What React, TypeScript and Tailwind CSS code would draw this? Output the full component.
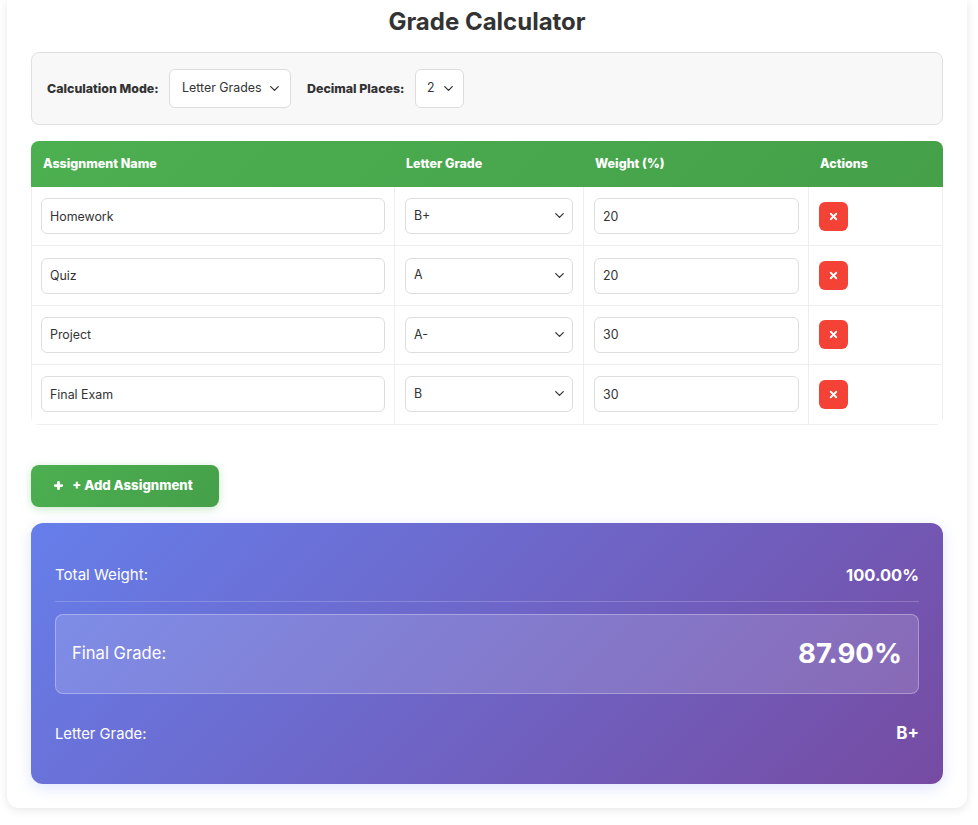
import React from "react";
import { ChevronDown, Plus, X } from "lucide-react";

const ROWS = [
  { name: "Homework", grade: "B+", weight: "20" },
  { name: "Quiz", grade: "A", weight: "20" },
  { name: "Project", grade: "A-", weight: "30" },
  { name: "Final Exam", grade: "B", weight: "30" },
];

const GRADES = ["A+", "A", "A-", "B+", "B", "B-", "C+", "C", "C-", "D", "F"];

export default function App() {
  return (
    <div className="bg-white pl-[7px] pb-[17px] font-['Inter',sans-serif] text-[#333]">
      <div className="w-[960px] rounded-b-xl bg-white px-6 pb-6 shadow-[0_2px_10px_rgba(0,0,0,0.1)]">
        <h1 className="h-[52px] pt-[5px] text-center text-[24px] leading-[34px] font-bold text-[#333]">Grade Calculator</h1>

        <div className="flex h-[73px] items-center rounded-lg border border-[#e0e0e0] bg-[#f8f8f8] pl-[15px]">
          <label className="w-[122px] pt-px text-[12.4px] font-extrabold">Calculation Mode:</label>
          <div className="relative">
            <select defaultValue="Letter Grades" className="h-[39px] w-[122px] appearance-none rounded-md border border-[#ddd] bg-white pl-3 text-[12.4px]">
              <option>Letter Grades</option>
              <option>Percentages</option>
            </select>
            <ChevronDown size={15} className="pointer-events-none absolute top-3 right-[9px]" />
          </div>
          <label className="ml-4 w-[108px] pt-px text-[12.4px] font-extrabold">Decimal Places:</label>
          <div className="relative">
            <select defaultValue="2" className="h-[39px] w-[49px] appearance-none rounded-md border border-[#ddd] bg-white pl-[11px] text-[12.4px]">
              <option>1</option>
              <option>2</option>
              <option>3</option>
            </select>
            <ChevronDown size={15} className="pointer-events-none absolute top-3 right-2" />
          </div>
        </div>

        <div className="mt-4 overflow-hidden rounded-lg">
          <table className="w-[912px] table-fixed border-separate border-spacing-0 text-[12.4px]">
            <colgroup>
              <col className="w-[364px]" />
              <col className="w-[189px]" />
              <col className="w-[225px]" />
              <col className="w-[134px]" />
            </colgroup>
            <thead>
              <tr className="h-[46px] bg-[linear-gradient(135deg,#4caf50,#45a049)] text-left text-[12.5px] text-white">
                <th className="pl-3 font-extrabold">Assignment Name</th>
                <th className="pl-[11px] font-extrabold">Letter Grade</th>
                <th className="pl-[11px] font-extrabold">Weight (%)</th>
                <th className="pl-[11px] font-extrabold">Actions</th>
              </tr>
            </thead>
            <tbody>
              {ROWS.map((row) => (
                <tr key={row.name} className="h-[59.4px]">
                  <td className="border-r border-b border-l border-[#eee] px-[9px]">
                    <input defaultValue={row.name} className="h-9 w-full rounded-md border border-[#ddd] px-2 text-[12.4px]" />
                  </td>
                  <td className="border-r border-b border-[#eee] px-2.5">
                    <div className="relative">
                      <select defaultValue={row.grade} className="h-9 w-full appearance-none rounded-md border border-[#ddd] bg-white pl-2 text-[12.4px]">
                        {GRADES.map((g) => (
                          <option key={g}>{g}</option>
                        ))}
                      </select>
                      <ChevronDown size={15} className="pointer-events-none absolute top-2.5 right-[6px]" />
                    </div>
                  </td>
                  <td className="border-r border-b border-[#eee] pr-[9px] pl-2.5">
                    <input defaultValue={row.weight} className="h-9 w-full rounded-md border border-[#ddd] px-2 text-[12.4px]" />
                  </td>
                  <td className="border-r border-b border-[#eee] px-2.5">
                    <button className="flex h-[29px] w-[29px] items-center justify-center rounded-md bg-[#f44336] text-white">
                      <X size={11} strokeWidth={4} />
                    </button>
                  </td>
                </tr>
              ))}
            </tbody>
          </table>
        </div>

        <button className="mt-10 flex h-[42px] w-[188px] items-center justify-center gap-2 rounded-lg bg-[linear-gradient(135deg,#4caf50,#45a049)] pr-1 text-[13.2px] font-extrabold text-white shadow-[0_2px_8px_rgba(76,175,80,0.3)]">
          <Plus size={11} strokeWidth={6} />
          <span>+ Add Assignment</span>
        </button>

        <div className="mt-4 h-[261px] rounded-xl bg-[linear-gradient(135deg,#667eea,#764ba2)] px-6 pt-6 text-white shadow-[0_4px_15px_rgba(102,126,234,0.2)]">
          <div className="flex h-[55px] items-center justify-between border-b border-white/20 pt-[3px]">
            <span className="text-[15.1px]">Total Weight:</span>
            <span className="text-[16.5px] font-bold">100.00%</span>
          </div>
          <div className="mt-3 flex h-20 items-center justify-between rounded-lg border border-white/30 bg-white/15 px-4">
            <span className="text-[16.6px]">Final Grade:</span>
            <span className="text-[27.6px] font-bold">87.90%</span>
          </div>
          <div className="flex h-[78px] items-center justify-between pt-[3px]">
            <span className="text-[14.8px]">Letter Grade:</span>
            <span className="text-[17px] font-bold">B+</span>
          </div>
        </div>
      </div>
    </div>
  );
}
